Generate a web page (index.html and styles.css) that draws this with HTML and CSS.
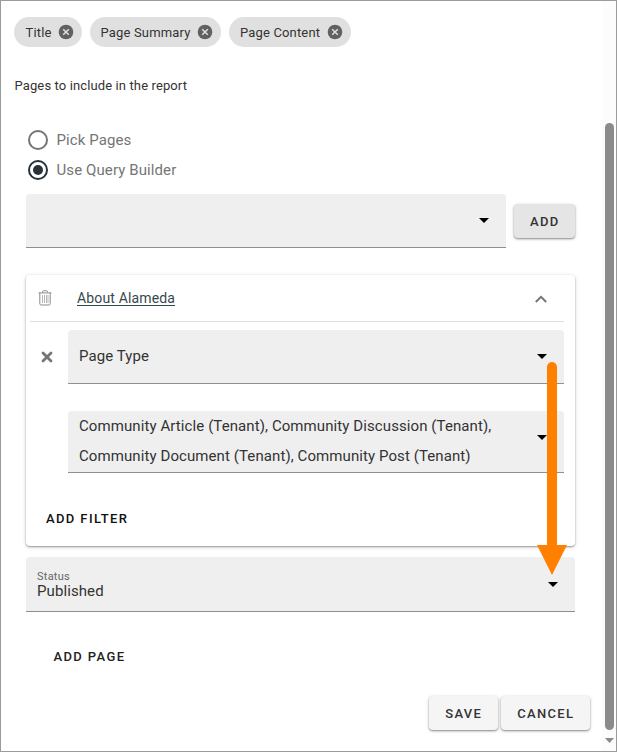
FILE: index.html
```html
<!DOCTYPE html>
<html lang="en">
<head>
<meta charset="utf-8">
<title>Report settings</title>
<link rel="stylesheet" href="styles.css">
</head>
<body>
<div class="window">
  <main class="content">
    <div class="chips">
      <span class="chip chip-title">Title <svg class="remove" viewBox="0 0 16 16"><circle cx="8" cy="8" r="7.3"/><path d="M5.2 5.2l5.6 5.6M10.8 5.2l-5.6 5.6"/></svg></span>
      <span class="chip chip-summary">Page Summary <svg class="remove" viewBox="0 0 16 16"><circle cx="8" cy="8" r="7.3"/><path d="M5.2 5.2l5.6 5.6M10.8 5.2l-5.6 5.6"/></svg></span>
      <span class="chip chip-content">Page Content <svg class="remove" viewBox="0 0 16 16"><circle cx="8" cy="8" r="7.3"/><path d="M5.2 5.2l5.6 5.6M10.8 5.2l-5.6 5.6"/></svg></span>
    </div>
    <p class="caption">Pages to include in the report</p>
    <div class="form">
      <div class="radio"><span class="dot"></span><span>Pick Pages</span></div>
      <div class="radio"><span class="dot checked"></span><span>Use Query Builder</span></div>
      <div class="query-row">
        <div class="select query"><svg class="caret" viewBox="0 0 10 5"><path d="M0 0h10L5 5z"/></svg></div>
        <button class="button add">ADD</button>
      </div>
      <section class="card">
        <header class="card-head">
          <svg class="trash" viewBox="0 0 14 16"><path d="M.5 2.9h13M4.5 2.5V1.6Q4.5.8 5.3.8h3.4q.8 0 .8.8v.9M1.8 3v10.6q0 1.4 1.4 1.4h7.6q1.4 0 1.4-1.4V3"/><path class="slats" d="M4.5 5v8M6.5 5v8M8.500 5v8M10 5v8"/></svg>
          <a class="link">About Alameda</a>
          <svg class="chevron" viewBox="0 0 12 8"><path d="M.8 7L6 1.800 11.200 7"/></svg>
        </header>
        <div class="filter">
          <svg class="cross" viewBox="0 0 12 12"><path d="M2 2l8 8M10 2l-8 8"/></svg>
          <div class="fields">
            <div class="select type"><span>Page Type</span><svg class="caret" viewBox="0 0 10 5"><path d="M0 0h10L5 5z"/></svg></div>
            <div class="select values"><span>Community Article (Tenant), Community Discussion (Tenant),<br>Community Document (Tenant), Community Post (Tenant)</span><svg class="caret" viewBox="0 0 10 5"><path d="M0 0h10L5 5z"/></svg></div>
          </div>
        </div>
        <button class="text-button add-filter">ADD FILTER</button>
      </section>
      <div class="select status"><span class="stack"><small>Status</small><span>Published</span></span><svg class="caret" viewBox="0 0 10 5"><path d="M0 0h10L5 5z"/></svg></div>
      <button class="text-button add-page">ADD PAGE</button>
    </div>
    <footer class="actions">
      <button class="button save">SAVE</button>
      <button class="button cancel">CANCEL</button>
    </footer>
  </main>
  <aside class="scrollbar">
    <div class="thumb"></div>
    <svg class="down" viewBox="0 0 9 5"><path d="M0 0h9L4.5 5z"/></svg>
  </aside>
  <svg class="arrow" viewBox="0 0 30 213"><path d="M10 183V5a5 5 0 0 1 10 0v178h10L15 213 0 183z"/></svg>
</div>
</body>
</html>
```
FILE: styles.css
```css
* { box-sizing: border-box; }
body {
  margin: 0;
  background: #fff;
  color: #333;
  font-family: Roboto, "Liberation Sans", sans-serif;
}
svg { display: block; flex: none; }
button { font-family: inherit; border: 0; padding: 0; }
.window {
  position: relative;
  display: flex;
  width: 617px;
  height: 752px;
  border: 1px solid #9b9b9b;
}
.content { flex: 1; padding-top: 16px; }
.chips { display: flex; gap: 8px; padding-left: 13px; }
.chip {
  display: flex;
  align-items: center;
  justify-content: space-between;
  height: 30px;
  padding: 0 8px 0 11.5px;
  border-radius: 15px;
  background: #e0e0e0;
  font-size: 13px;
  letter-spacing: .16px;
  white-space: nowrap;
}
.chip-title { width: 68px; }
.chip-summary { width: 131px; padding-left: 10.5px; }
.chip-content { width: 122px; padding-left: 11px; }
.remove { width: 16px; height: 16px; fill: #616161; }
.remove path { stroke: #e0e0e0; stroke-width: 1.5; }
.caption {
  margin: 29px 0 0 13.5px;
  font-size: 13px;
  line-height: 20px;
  letter-spacing: .12px;
}
.form { padding-left: 25px; width: 574px; padding-top: 29px; }
.radio {
  display: flex;
  align-items: center;
  gap: 9px;
  height: 30px;
  padding-left: 1.5px;
  color: #757575;
  font-size: 15px;
  letter-spacing: .1px;
}
.dot {
  display: grid;
  place-items: center;
  width: 20px;
  height: 20px;
  border: 2px solid #757575;
  border-radius: 50%;
}
.checked { border-color: #263238; }
.checked::after {
  content: "";
  width: 10px;
  height: 10px;
  border-radius: 50%;
  background: #263238;
}
.query-row { display: flex; gap: 8px; align-items: flex-start; margin-top: 9px; }
.select {
  display: flex;
  align-items: center;
  justify-content: space-between;
  padding: 0 17.5px 0 11px;
  border-bottom: 1px solid #8f8f8f;
  border-radius: 4px 4px 0 0;
  background: #efefef;
  font-size: 15px;
  letter-spacing: .09px;
}
.caret { width: 10px; height: 5px; fill: #000; }
.query { width: 480px; height: 54px; justify-content: flex-end; }
.button {
  height: 34px;
  border-radius: 4px;
  background: #f5f5f5;
  color: #333;
  font-size: 13px;
  font-weight: 500;
  letter-spacing: 1.3px;
  text-indent: .5px;
  box-shadow: 0 1px 2px rgba(0,0,0,.4), 0 1px 4px rgba(0,0,0,.12);
}
.add { width: 61px; margin-top: 10px; background: #e5e5e5; }
.card {
  height: 271px;
  margin-top: 27px;
  border-radius: 4px;
  background: #fff;
  box-shadow: 0 1px 2px rgba(0,0,0,.36), 0 1px 5px rgba(0,0,0,.12);
}
.card-head {
  display: flex;
  align-items: center;
  height: 47px;
  margin: 0 11px 0 4px;
  padding: 0 17px 0 8px;
  border-bottom: 1px solid #dedede;
}
.trash { width: 14px; height: 16px; fill: none; stroke: #8b8b8b; stroke-width: 1; }
.slats { stroke: #a5a5a5; stroke-width: .8; }
.link {
  margin-left: 25px;
  color: #37474f;
  font-size: 14px;
  letter-spacing: .15px;
  text-decoration: underline;
  text-underline-offset: 2px;
}
.chevron { width: 12px; height: 8px; margin: 2px 0 0 auto; fill: none; stroke: #757575; stroke-width: 2; }
.filter { display: flex; padding: 8px 11px 0 15px; }
.cross { width: 12px; height: 12px; margin: 21px 15px 0 0; stroke: #757575; stroke-width: 2.8; stroke-linecap: round; }
.fields { flex: 1; }
.type { height: 54px; }
.type span { padding-bottom: 2px; }
.values { height: 62px; margin-top: 27px; line-height: 30px; }
.values span { padding-bottom: 1px; }
.values .caret { margin-bottom: 8px; }
.text-button {
  display: block;
  background: none;
  color: #222;
  font-size: 13px;
  font-weight: 500;
  line-height: 20px;
  letter-spacing: 1.38px;
}
.add-filter { margin: 36px 0 0 20px; color: #111; }
.status { height: 55px; margin-top: 11px; }
.stack { display: flex; flex-direction: column; line-height: 17px; padding-top: 3px; }
.stack small { height: 12px; line-height: 12px; font-size: 11px; color: #666; letter-spacing: .25px; }
.add-page { margin: 35px 0 0 27.500px; }
.actions { display: flex; gap: 3px; margin: 29px 0 0 428px; }
.save { width: 69px; }
.cancel { width: 89px; }
.scrollbar {
  display: flex;
  flex-direction: column;
  align-items: center;
  width: 14px;
  padding: 122px 0 0 1px;
  background: #fcfcfc;
}
.thumb { width: 9px; height: 607px; border-radius: 5px; background: #8b8b8b; }
.down { width: 9px; height: 5px; margin-top: 8px; fill: #8b8b8b; }
.arrow { position: absolute; left: 536px; top: 361px; width: 30px; height: 213px; fill: #ff8000; }
```
